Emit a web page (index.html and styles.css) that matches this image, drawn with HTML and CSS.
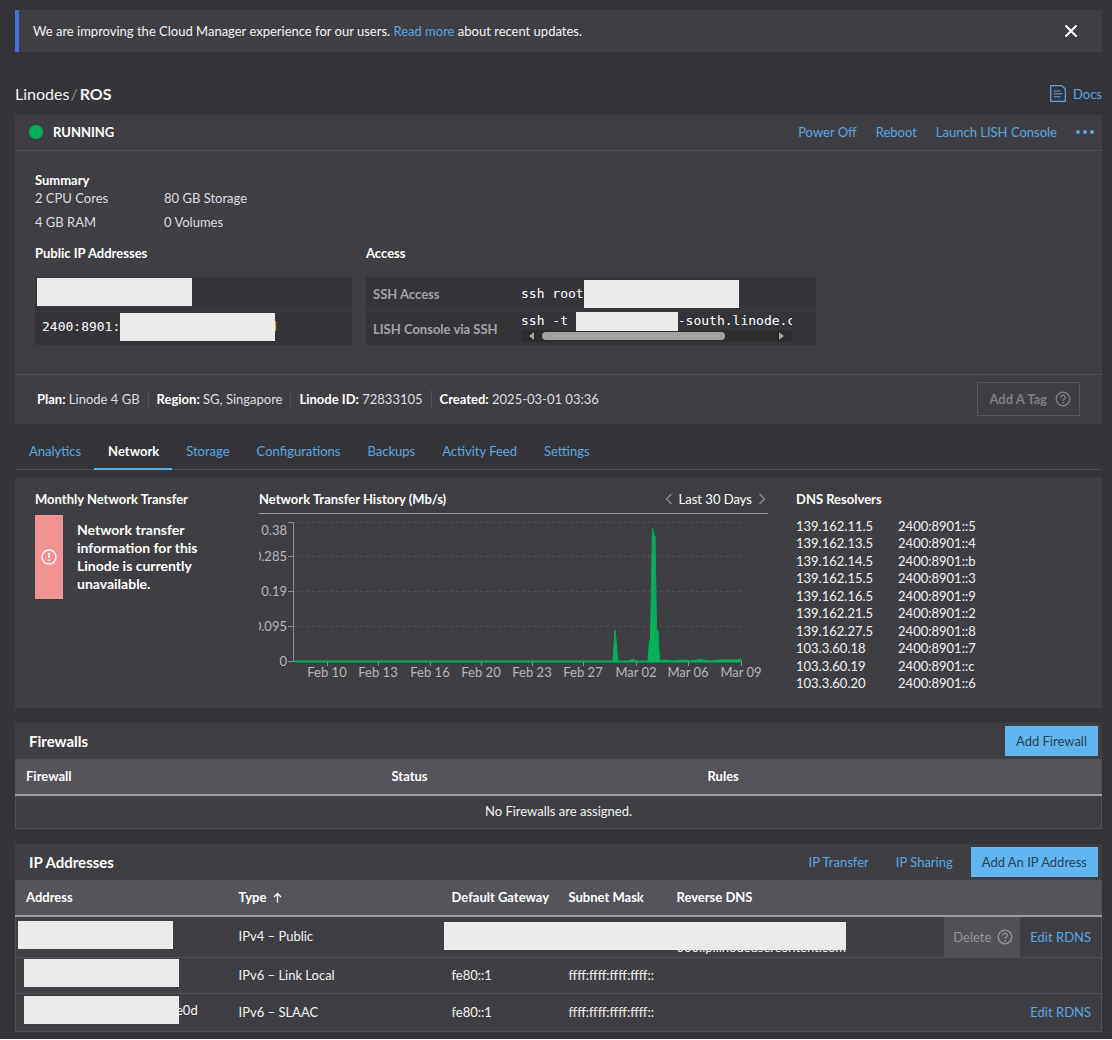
FILE: index.html
```html
<!DOCTYPE html>
<html lang="en">
<head>
<meta charset="utf-8">
<meta name="viewport" content="width=device-width, initial-scale=1">
<title>ROS | Linodes</title>
<link rel="stylesheet" href="styles.css">
</head>
<body>
<svg width="0" height="0" class="defs" aria-hidden="true">
  <symbol id="help" viewBox="0 0 16 16">
    <circle cx="8" cy="8" r="6.8" fill="none" stroke="currentColor" stroke-width="1.3"/>
    <path d="M5.8 6.4a2.2 2.2 0 1 1 3.4 1.8C8.4 8.7 8 9 8 9.8" fill="none" stroke="currentColor" stroke-width="1.3"/>
    <circle cx="8" cy="11.8" r=".9" fill="currentColor"/>
  </symbol>
</svg>
<main class="page">
  <aside class="notice">
    <p>We are improving the Cloud Manager experience for our users. <a href="#">Read more</a> about recent updates.</p>
    <button class="icon-button" aria-label="Close">
      <svg width="14" height="14" viewBox="0 0 14 14"><path d="M2 2l10 10M12 2L2 12" stroke="#fff" stroke-width="2" stroke-linecap="round"/></svg>
    </button>
  </aside>

  <header class="title-bar">
    <nav class="crumbs"><a href="#">Linodes</a><span class="slash">/</span><h1>ROS</h1></nav>
    <a class="docs" href="#">
      <svg width="16" height="17" viewBox="0 0 16 17" fill="none" stroke="currentColor"><path d="M.7 .7h11l3.6 3.4v12.2H.7z" stroke-width="1.3"/><path d="M4 6h6.500M3.500 8.800h9M4 11.700h6.500"/></svg>
      Docs</a>
  </header>

  <section class="panel">
    <div class="status-row">
      <span class="dot"></span><strong>RUNNING</strong>
      <div class="power-actions">
        <a href="#">Power Off</a><a href="#">Reboot</a><a href="#">Launch LISH Console</a>
        <button class="icon-button" aria-label="More actions">
          <svg width="18" height="4" viewBox="0 0 18 4" fill="#5aaeea"><circle cx="2" cy="2" r="1.900"/><circle cx="9" cy="2" r="1.900"/><circle cx="16" cy="2" r="1.900"/></svg>
        </button>
      </div>
    </div>
    <div class="details">
      <h2>Summary</h2>
      <ul class="specs"><li>2 CPU Cores</li><li>80 GB Storage</li><li>4 GB RAM</li><li>0 Volumes</li></ul>
      <div class="address-grid">
        <section>
          <h2>Public IP Addresses</h2>
          <div class="code-row ip-masked"><span class="mask"></span></div>
          <div class="code-row ip-row"><code>2400:8901:</code><span class="mask"></span><code class="ip-tail">d</code></div>
        </section>
        <section>
          <h2>Access</h2>
          <div class="code-row access-row"><span class="label">SSH Access</span><div class="command"><code>ssh root</code><span class="mask"></span></div></div>
          <div class="code-row access-row"><span class="label">LISH Console via SSH</span>
            <div class="scroll-box">
              <div class="command"><code>ssh -t </code><span class="mask mask-short"></span><code>-south.linode.com</code></div>
              <div class="scrollbar"><span class="arrow-left"></span><span class="track"><span class="thumb"></span></span><span class="arrow-right"></span></div>
            </div>
          </div>
        </section>
      </div>
    </div>
    <footer class="meta">
      <ul>
        <li><b>Plan:</b> Linode 4 GB</li><li><b>Region:</b> SG, Singapore</li><li><b>Linode ID:</b> 72833105</li><li><b>Created:</b> 2025-03-01 03:36</li>
      </ul>
      <button class="tag-button">Add A Tag <svg width="16" height="16"><use href="#help"/></svg></button>
    </footer>
  </section>

  <nav class="tabs">
    <a href="#">Analytics</a><a href="#" class="active" aria-current="page">Network</a><a href="#">Storage</a><a href="#">Configurations</a><a href="#">Backups</a><a href="#">Activity Feed</a><a href="#">Settings</a>
  </nav>

  <section class="panel network">
    <section>
      <h2>Monthly Network Transfer</h2>
      <div class="error">
        <span class="error-mark"><svg width="16" height="16" viewBox="0 0 16 16" fill="none" stroke="#fff"><circle cx="8" cy="8" r="7" stroke-width="1.300"/><path d="M8 4v5M8 10.500v1.500" stroke-width="1.600"/></svg></span>
        <p>Network transfer information for this Linode is currently unavailable.</p>
      </div>
    </section>
    <section>
      <div class="chart-head">
        <h2>Network Transfer History (Mb/s)</h2>
        <div class="range">
          <button class="icon-button" aria-label="Previous"><svg width="8" height="12" viewBox="0 0 8 12" fill="none" stroke="#8b8b90" stroke-width="1.300"><path d="M6.500 1L1.500 6l5 5"/></svg></button>
          <span>Last 30 Days</span>
          <button class="icon-button" aria-label="Next"><svg width="8" height="12" viewBox="0 0 8 12" fill="none" stroke="#8b8b90" stroke-width="1.300"><path d="M1.500 1l5 5-5 5"/></svg></button>
        </div>
      </div>
      <svg class="chart" viewBox="0 0 509 170">
        <path class="gridline" d="M35 8.500H482M35 42.500H482M35 77.500H482M35 112.500H482"/>
        <path class="axis" d="M29 8.500H34.500V147.500H29M29 42.500h5M29 77.500h5M29 112.500h5M34 147.500H482.500M68.500 147v5M119.500 147v5M171.500 147v5M222.500 147v5M273.500 147v5M324.500 147v5M377.500 147v5M429.500 147v5M482.500 147v5"/>
        <path class="area" d="M35 147H354L356 116L359 147H369L374 145.500L379 147H389L390.500 127L391.500 125L393.500 14L395 22L396 22L397.500 116L399 117L400.500 147L405 146L415 147L427 146L432 147L441 145.500L450 147L460 146L478 146L482 145V148H35Z"/>
        <g class="y-labels"><text x="28" y="21">0.38</text><text x="28" y="47">0.285</text><text x="28" y="82">0.19</text><text x="28" y="117">0.095</text><text x="28" y="152">0</text></g>
        <g class="x-labels"><text x="68" y="163">Feb 10</text><text x="119" y="163">Feb 13</text><text x="171" y="163">Feb 16</text><text x="222" y="163">Feb 20</text><text x="273" y="163">Feb 23</text><text x="324" y="163">Feb 27</text><text x="377" y="163">Mar 02</text><text x="429" y="163">Mar 06</text><text x="482" y="163">Mar 09</text></g>
      </svg>
    </section>
    <section>
      <h2>DNS Resolvers</h2>
      <div class="resolvers">
        <ul><li>139.162.11.5</li><li>139.162.13.5</li><li>139.162.14.5</li><li>139.162.15.5</li><li>139.162.16.5</li><li>139.162.21.5</li><li>139.162.27.5</li><li>103.3.60.18</li><li>103.3.60.19</li><li>103.3.60.20</li></ul>
        <ul><li>2400:8901::5</li><li>2400:8901::4</li><li>2400:8901::b</li><li>2400:8901::3</li><li>2400:8901::9</li><li>2400:8901::2</li><li>2400:8901::8</li><li>2400:8901::7</li><li>2400:8901::c</li><li>2400:8901::6</li></ul>
      </div>
    </section>
  </section>

  <section class="panel table-panel">
    <header><h2>Firewalls</h2><button class="primary">Add Firewall</button></header>
    <table class="firewalls">
      <colgroup><col class="fw-name"><col class="fw-status"><col></colgroup>
      <thead><tr><th>Firewall</th><th>Status</th><th>Rules</th></tr></thead>
      <tbody><tr><td colspan="3" class="empty">No Firewalls are assigned.</td></tr></tbody>
    </table>
  </section>

  <section class="panel table-panel">
    <header><h2>IP Addresses</h2><a href="#">IP Transfer</a><a href="#">IP Sharing</a><button class="primary">Add An IP Address</button></header>
    <table class="addresses">
      <colgroup><col class="ip-address"><col class="ip-type"><col class="ip-gateway"><col class="ip-mask"><col class="ip-rdns"><col></colgroup>
      <thead><tr><th>Address</th><th>Type <svg width="9" height="11" viewBox="0 0 9 11" fill="none" stroke="#fff" stroke-width="1.300"><path d="M4.500 10.500V1.500M1 5l3.500-3.500L8 5"/></svg></th><th>Default Gateway</th><th>Subnet Mask</th><th>Reverse DNS</th><th></th></tr></thead>
      <tbody>
        <tr class="tall">
          <td class="masked"><span class="mask"></span></td><td>IPv4 – Public</td>
          <td class="covered"><span class="mask mask-long"></span></td><td></td><td class="rdns">000.ip.linodeusercontent.com</td>
          <td class="row-actions"><div><button class="delete" disabled>Delete <svg width="16" height="16"><use href="#help"/></svg></button><a href="#">Edit RDNS</a></div></td>
        </tr>
        <tr><td class="masked masked-inset"><span class="mask"></span></td><td>IPv6 – Link Local</td><td>fe80::1</td><td>ffff:ffff:ffff:ffff::</td><td></td><td></td></tr>
        <tr class="last"><td class="masked masked-inset"><div class="partial"><span class="mask"></span>e0d</div></td><td>IPv6 – SLAAC</td><td>fe80::1</td><td>ffff:ffff:ffff:ffff::</td><td></td><td class="row-actions"><div><a href="#">Edit RDNS</a></div></td></tr>
      </tbody>
    </table>
  </section>
</main>
</body>
</html>
```

FILE: styles.css
```css
* { box-sizing: border-box; }
html { background: #fff; }
body {
  margin: 0;
  color: #f2f2f4;
  font: 13px/18px Lato, "Noto Sans", sans-serif;
}
h1, h2, p, ul { margin: 0; padding: 0; }
ul { list-style: none; }
h2 { font-size: 13px; line-height: 18px; font-weight: 700; color: #fff; }
a { color: #5aa5e2; text-decoration: none; }
button { font: inherit; cursor: pointer; border: 0; border-radius: 0; }
svg { display: block; flex: none; }
.defs { position: absolute; }
.page { padding: 10px 10px 7px 15px; background: #353539; }
.panel { background: #3f3f43; }
.icon-button { display: flex; padding: 0; background: none; }

.notice {
  display: flex;
  align-items: center;
  justify-content: space-between;
  height: 42px;
  padding: 0 24px 0 14px;
  border-left: 4px solid #4a6fdc;
  background: #3f3f43;
}

.title-bar { display: flex; align-items: center; justify-content: space-between; height: 63px; padding-top: 20px; }
.crumbs { display: flex; align-items: center; font-size: 16px; }
.crumbs a { color: #f2f2f4; }
.crumbs h1 { font-size: 16px; font-weight: 700; }
.slash { margin: 0 2px 0 1px; color: #85858b; }
.docs { display: flex; align-items: center; gap: 7px; }

.status-row { display: flex; align-items: center; height: 36px; padding: 0 8px 2px 14px; border-bottom: 1px solid #505056; }
.status-row strong { color: #fff; }
.dot { width: 14px; height: 14px; margin-right: 10px; border-radius: 50%; background: #00b159; }
.power-actions { display: flex; align-items: center; gap: 19px; margin-left: auto; }

.details { padding: 20px 20px 29px; }
.specs { display: grid; grid-template-columns: 129px 129px; row-gap: 6px; color: #dcdce0; }
.address-grid { display: grid; grid-template-columns: 317px minmax(0, 450px); column-gap: 14px; padding-top: 13px; }
.address-grid h2 { margin-bottom: 15px; }
.code-row { display: flex; align-items: center; height: 34px; background: #353539; color: #fff; }
.code-row + .code-row { border-top: 1px solid #3b3b3f; }
code { font: 13px/18px "DejaVu Sans Mono", monospace; white-space: pre; }
.mask { position: relative; z-index: 1; flex: none; display: block; width: 155px; height: 28px; background: #ebebeb; }
.ip-masked { padding: 0 2px 4px; }
.ip-row { padding: 0 7px 4px; }
.ip-tail { margin-left: -6px; color: #cdb65c; }
.access-row { padding: 0 24px 0 7px; }
.label { width: 148px; flex: none; font-weight: 700; color: #a3a3a8; }
.command { display: flex; align-items: center; }
.scroll-box { flex: 1; align-self: flex-start; min-width: 0; overflow: hidden; }
.scroll-box .command { height: 18px; }
.mask-short { width: 102px; height: 20px; }
.scrollbar { display: flex; align-items: center; height: 12px; padding: 0 8px; gap: 8px; background: #2c2c2c; }
.track { flex: 1; }
.thumb { display: block; width: 80%; height: 8px; border-radius: 4px; background: #a3a3a3; }
.arrow-left, .arrow-right { border: 4px solid transparent; }
.arrow-left { border-left-width: 0; border-right: 5px solid #a3a3a3; }
.arrow-right { border-right-width: 0; border-left: 5px solid #a3a3a3; }

.meta { display: flex; align-items: center; justify-content: space-between; height: 50px; padding: 0 22px 2px 14px; border-top: 1px solid #505056; }
.meta ul { display: flex; color: #dcdce0; }
.meta li { padding: 0 8px; }
.meta li + li { border-left: 1px solid #505056; }
.meta b { color: #fff; }
.tag-button { display: flex; align-items: center; gap: 8px; height: 34px; padding: 0 8px 0 11px; border: 1px solid #57575d; background: none; color: #7f7f85; font-weight: 700; }

.tabs { display: flex; height: 46px; border-bottom: 1px solid #4b4b51; }
.tabs a { height: 46px; padding: 18px 13px 0 14px; }
.tabs .active { border-bottom: 2px solid #5aaeea; color: #fff; font-weight: 700; }

.network { display: grid; grid-template-columns: 196px minmax(0, 1fr) 286px; column-gap: 28px; margin-top: 7px; padding: 13px 20px 16px; }
.error { display: flex; gap: 14px; margin-top: 7px; color: #fff; font-size: 14px; font-weight: 700; }
.error-mark { display: flex; align-items: center; justify-content: center; width: 28px; height: 84px; background: #f29393; flex: none; }
.error p { width: 135px; padding-top: 6px; }
.chart-head { display: flex; justify-content: space-between; height: 24px; border-bottom: 1px solid #9a9aa0; }
.range { display: flex; height: 18px; align-items: center; gap: 6px; padding-right: 2px; color: #fff; }
.chart { width: 100%; height: auto; }
.chart text { font-size: 13px; fill: #b5b5ba; }
.y-labels { text-anchor: end; }
.x-labels { text-anchor: middle; }
.gridline { stroke: #505055; stroke-dasharray: 3 3; }
.axis { fill: none; stroke: #8b8b90; }
.area { fill: #00b159; stroke: #00b159; stroke-width: 1; }
.resolvers { display: flex; gap: 25px; padding-top: 10px; line-height: 17px; }
.resolvers ul { display: flex; flex-direction: column; justify-content: space-between; min-height: 174px; }

.table-panel { margin-top: 15px; }
.table-panel header { display: flex; align-items: center; height: 36px; padding: 0 4px 1px 14px; }
.table-panel h2 { margin-right: auto; font-size: 15px; }
.table-panel header a { margin-right: 27px; }
.table-panel header .primary { margin-left: -9px; }
.primary { height: 30px; padding: 0 11px; background: #5fb6f0; color: #26425a; }
table { width: 100%; border-collapse: collapse; table-layout: fixed; border: 1px solid #505056; }
th { height: 35px; padding: 0 10px 2px; background: #54545a; border-bottom: 2px solid #9d9da2; text-align: left; color: #fff; font-weight: 700; white-space: nowrap; }
th svg { display: inline-block; margin-left: 3px; vertical-align: -1px; }
td { height: 36px; padding: 0 10px 1px; border-bottom: 1px solid #505056; white-space: nowrap; }
.firewalls td { height: 34px; }
.empty { text-align: center; }
.fw-name { width: 366px; }
.fw-status { width: 316px; }
.ip-address, .ip-type { width: 213px; }
.ip-gateway { width: 117px; }
.ip-mask { width: 108px; }
.ip-rdns { width: 190px; }
.tall td { height: 41px; }
.last td { height: 38px; }
.masked { padding: 0 2px 4px; }
.masked-inset { padding: 0 8px 5px; }
.covered { position: relative; }
.mask-long { position: absolute; top: 5px; left: 2px; width: 402px; }
.rdns { padding: 21px 10px 0; }
.partial { display: flex; align-items: center; }
.partial .mask { margin-right: -3px; }
.row-actions div { display: flex; align-items: center; justify-content: flex-end; gap: 10px; }
.row-actions { padding: 0 10px 0 0; }
.delete { display: flex; align-items: center; gap: 6px; height: 40px; padding: 0 7px 0 9px; background: #505055; color: #929298; }
```
